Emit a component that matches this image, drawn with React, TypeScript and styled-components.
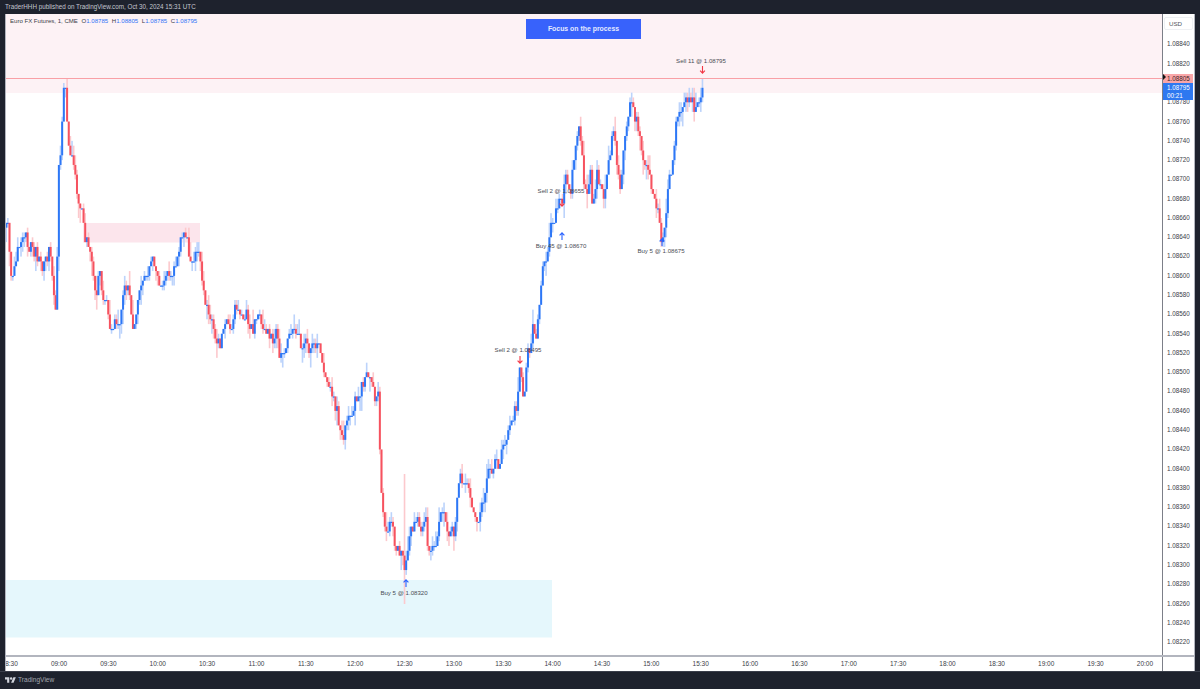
import React from "react";
import styled, { createGlobalStyle } from "styled-components";

const Global = createGlobalStyle`
  html, body { margin: 0; padding: 0; background: #1e222d; }
  #root { width: 1200px; height: 689px; }
`;

const FONT = `"Liberation Sans", Arial, sans-serif`;

const Page = styled.div`
  width: 1200px; height: 689px; display: flex; flex-direction: column;
  background: #1e222d; font-family: ${FONT}; overflow: hidden;
`;
const TopBar = styled.div`
  height: 14px; padding-left: 5px; font-size: 6.3px; line-height: 14px; color: #c3c6cf; white-space: nowrap;
`;
const Frame = styled.div`
  margin: 0 5px; height: 657px; display: flex; flex-direction: column; background: #fff; box-sizing: border-box;
  border-right: 1px solid #b2b5be; border-left: 1px solid #b2b5be;
`;
const ChartRow = styled.div`
  height: 641px; display: flex; border-bottom: 2px solid #b2b5be; box-sizing: content-box;
`;
const Pane = styled.div`
  position: relative; width: 1156px; overflow: hidden;
`;
const ChartSvg = styled.svg`
  position: absolute; inset: 0; display: block;
`;
const Legend = styled.div`
  position: absolute; left: 4px; top: 3px; font-size: 6.05px; line-height: 8px; color: #3b3e47; white-space: nowrap;
  display: flex; gap: 3.6px;
`;
const LegendItem = styled.span``;
const Val = styled.span`color: #2e72f5; font-size: 6.1px;`;
const Banner = styled.div`
  position: absolute; left: 520px; top: 5px; width: 115px; height: 20px; background: #3862fb;
  color: #e4eaff; font-size: 6.9px; font-weight: 700; line-height: 20px; text-align: center;
`;
const PriceAxis = styled.div`
  position: relative; width: 32px; border-left: 1px solid #7c7f88; background: #fff; overflow: hidden;
  padding-top: 20.4px; box-sizing: border-box;
`;
const UsdBox = styled.div`
  position: absolute; left: 1px; top: 3px; width: 29px; height: 13px; border: 1px solid #eef0f3; border-radius: 2px;
  box-sizing: border-box; font-size: 6.2px; line-height: 11px; color: #50535e; padding-left: 4px;
`;
const PriceLabel = styled.div<{ $covered?: boolean }>`
  height: 19.29px; line-height: 19.29px; font-size: 6.3px; color: #3b3e47; padding-left: 4px;
  visibility: ${(p) => (p.$covered ? "hidden" : "visible")};
`;
const LastHigh = styled.div`
  position: absolute; left: 0; top: 60px; width: 30px; height: 9px; background: #f9a6a8; color: #3b2527;
  font-size: 6.3px; line-height: 9px; padding-left: 4px; box-sizing: border-box;
`;
const LastPrice = styled.div`
  position: absolute; left: 0; top: 69px; width: 30px; height: 17px; background: #2e78f0; color: #fff;
  font-size: 6.3px; line-height: 8px; padding: 1px 0 0 4px; box-sizing: border-box;
`;
const Pointer = styled.div`
  position: absolute; left: 0; top: 60px; width: 0; height: 0;
  border-left: 3.5px solid #111; border-top: 3px solid transparent; border-bottom: 3px solid transparent;
`;
const TimeRow = styled.div`
  height: 14px; display: flex;
`;
const TimeAxis = styled.div`
  width: 1156px; overflow: hidden; display: flex;
`;
const TimeLabel = styled.div`
  flex: 0 0 49.36px; font-size: 6.5px; line-height: 13px; text-align: center; color: #3b3e47;
  &:first-child { margin-left: -21px; }
`;
const AxisCorner = styled.div`
  flex: 1; border-left: 1px solid #7c7f88;
`;
const Footer = styled.div`
  flex: 1; display: flex; align-items: center; gap: 2px; padding: 0 0 2px 5px;
  color: #a3a6af; font-size: 6.6px; border-top: 1px solid #3a3e4a;
`;
const Logo = styled.svg`display: block; width: 11px; height: 7px;`;
const TradeText = styled.text`
  font-family: ${FONT}; font-size: 6.1px; fill: #4a4c54; text-anchor: middle;
`;

const BLUE = "#2d77f6";
const RED = "#f6525f";
const BLUE_W = "#bcd3fb";
const RED_W = "#fcc9cd";

type P = [number, number];
const way: P[] = [
[5,228],[7,218],[9,245],[11,268],[12.5,276],[15,262],[17,256],[20,244],[23,238],[26,237],[29,246],[33,248],[36,252],[40,262],[44,266],[47,258],[50,250],[52,278],[54,300],[56.5,318],
[58.2,176],[60,160],[62,128],[64,90],[66,88],[67.6,128],[69,152],[71,155],[73,160],[75,172],[77,195],[80,212],[83,212],[85,238],[88,240],[90,250],[92,262],[95,288],[97,298],[99,268],[101,280],[103,298],[106,295],[108,312],[110,325],[113,328],[116,318],[120,322],[123,292],[127,284],[130,300],[133,325],[136,316],[139,296],[143,282],[147,276],[150,264],[153,262],[156,270],[159,280],[161,290],[164,280],[168,272],[172,274],[175,270],[178,260],[180,240],[183,234],[185,230],[187,240],[190,255],[193,262],[196,252],[199,255],[201,272],[203,288],[206,300],[208,312],[212,322],[214,336],[218,344],[220,346],[223,332],[228,322],[231,325],[234,312],[237,306],[240,316],[243,318],[246,314],[249,322],[252,334],[255,318],[258,316],[261,325],[264,338],[267,328],[270,335],[273,340],[276,332],[279,352],[282,356],[285,352],[288,338],[291,330],[294,326],[297,332],[300,342],[303,350],[306,344],[309,350],[313,345],[316,350],[318,342],[321,354],[323,368],[326,376],[328,388],[331,392],[334,398],[337,414],[340,432],[343,442],[346,428],[349,416],[352,412],[355,404],[358,396],[361,388],[364,380],[367,376],[370,378],[372,386],[375,398],[377,400],[379,384],
[380.5,490],[382,505],[384,520],[386,532],[388,528],[391,514],[393,530],[396,552],[399,548],[402,546],[405,574],[407,560],[409,540],[412,532],[415,520],[418,510],[420,525],[423,530],[426,522],[428,545],[431,552],[434,548],[437,540],[440,516],[443,510],[446,526],[449,534],[452,534],[455,530],[457,498],[459,480],[462,478],[465,480],[467,486],[470,492],[473,505],[476,520],[479,522],[482,508],[485,490],[488,472],[491,472],[494,466],[497,458],[499,470],[502,446],[505,450],[508,434],[511,430],[514,408],[516,408],[518,392],[520,366],[522,376],[524,408],[526,370],[528,350],[531,352],[533,318],[536,340],[538,316],[540,300],[542,270],[544,272],[546,258],[549,244],[551,228],[553,230],[556,212],[558,200],[561,196],[563,212],[565,170],[567,182],[570,200],[572,175],[575,152],[577,142],[579,130],[581,145],[583,170],[586,195],[588,190],[590,165],[592,200],[595,198],[597,176],[600,178],[603,198],[605,190],[608,165],[611,150],[613,120],[615,138],[618,172],[621,190],[623,150],[626,125],[629,108],[632,98],[634,110],[636,118],[639,132],[641,152],[644,168],[646,172],[649,160],[651,190],[654,202],[656,205],[658,200],[660,225],[662,242],[664,236],[666,215],[668,190],[671,170],[673,158],[675,132],[678,108],[680,116],[683,112],[686,98],[689,102],[692,98],[695,108],[697,100],[700,102],[703,90]
];

function priceAt(x: number) {
  for (let i = 0; i < way.length - 1; i++) {
    if (x >= way[i][0] && x <= way[i + 1][0]) {
      const t = (x - way[i][0]) / (way[i + 1][0] - way[i][0]);
      return way[i][1] + (way[i + 1][1] - way[i][1]) * t;
    }
  }
  return way[way.length - 1][1];
}

function rng(seed: number) {
  let s = seed;
  return () => { s = (s * 16807) % 2147483647; return s / 2147483647; };
}

const TICK = 4.8225;
const ORIGIN = 44.4;
const quant = (y: number) => ORIGIN + Math.round((y - ORIGIN) / TICK) * TICK;

const candles = (() => {
  const r = rng(20241030);
  const out: { x: number; o: number; c: number; h: number; l: number }[] = [];
  let prev = quant(priceAt(5));
  const ext = () => {
    const v = r();
    return v < 0.35 ? 0 : v < 0.7 ? TICK : v < 0.92 ? TICK * 2 : TICK * 3;
  };
  for (let x = 6.2; x <= 703.4; x += 1.646) {
    const base = priceAt(x);
    const c = x > 702 ? quant(88) : quant(base + (r() - 0.5) * 12);
    const o = prev;
    const top = Math.max(Math.min(o, c) - ext(), 78.2);
    const bot = Math.max(o, c) + ext();
    out.push({ x, o, c, h: top, l: bot });
    prev = c;
  }
  return out;
})();

const wickSpikes: Record<number, [number, number]> = {};
candles.forEach((k, i) => {
  if (Math.abs(k.x - 404) < 0.9) wickSpikes[i] = [474, 604];
  if (Math.abs(k.x - 66.6) < 0.9) wickSpikes[i] = [78, k.l];
  if (Math.abs(k.x - 703) < 0.9) wickSpikes[i] = [78, k.l];
});

const prices = Array.from({ length: 32 }, (_, i) => (1.0884 - i * 0.0002).toFixed(5));
const times = ["08:30","09:00","09:30","10:00","10:30","11:00","11:30","12:00","12:30","13:00","13:30","14:00","14:30","15:00","15:30","16:00","16:30","17:00","17:30","18:00","18:30","19:00","19:30","20:00"];

const trades = [
  { t: "Sell 11 @ 1.08795", x: 701, y: 63 },
  { t: "Sell 2 @ 1.08655", x: 561, y: 193 },
  { t: "Buy 45 @ 1.08670", x: 561, y: 248 },
  { t: "Sell 2 @ 1.08495", x: 518, y: 352 },
  { t: "Buy 5 @ 1.08675", x: 661, y: 253 },
  { t: "Buy 5 @ 1.08320", x: 404, y: 595 },
];
const downs: P[] = [[702.5, 66], [562, 199], [520, 356]];
const ups: P[] = [[562, 240], [662, 246], [406, 587]];

const Arrow = ({ x, y, up }: { x: number; y: number; up?: boolean }) => {
  const d = up
    ? `M${x} ${y}V${y - 7}M${x - 2.4} ${y - 4.6}L${x} ${y - 7.2}L${x + 2.4} ${y - 4.6}`
    : `M${x} ${y}V${y + 7}M${x - 2.4} ${y + 4.6}L${x} ${y + 7.2}L${x + 2.4} ${y + 4.6}`;
  return <path d={d} stroke={up ? "#2962ff" : "#f23645"} strokeWidth={1.1} fill="none" />;
};

export default function App() {
  return (
    <Page>
      <Global />
      <TopBar>TraderHHH published on TradingView.com, Oct 30, 2024 15:31 UTC</TopBar>
      <Frame>
        <ChartRow>
          <Pane>
            <ChartSvg width={1156} height={641} viewBox="6 14 1156 641">
              <rect x={6} y={14} width={1156} height={79} fill="#fdf2f5" />
              <rect x={83} y={223} width={117} height={19.5} fill="#fce5ec" />
              <rect x={6} y={580} width={546} height={57.5} fill="#e5f7fc" />
              {candles.map((k, i) => {
                const up = k.c <= k.o;
                const w = wickSpikes[i];
                const top = w ? w[0] : k.h;
                const bot = w ? w[1] : k.l;
                return <rect key={i} x={k.x - 0.8} y={top} width={1.6} height={bot - top} fill={up ? BLUE_W : RED_W} />;
              })}
              {candles.map((k, i) => (
                <rect
                  key={i}
                  x={k.x - 1}
                  y={Math.min(k.o, k.c)}
                  width={2}
                  height={Math.max(Math.abs(k.c - k.o), 1.2)}
                  fill={k.c <= k.o ? BLUE : RED}
                />
              ))}
              <rect x={6} y={78} width={1156} height={1} fill="#f9a0a6" />
              {trades.map((t) => (
                <TradeText key={t.t} x={t.x} y={t.y}>{t.t}</TradeText>
              ))}
              {downs.map(([x, y]) => <Arrow key={`${x}`} x={x} y={y} />)}
              {ups.map(([x, y]) => <Arrow key={`${x}`} x={x} y={y} up />)}
            </ChartSvg>
            <Legend>
              <LegendItem>Euro FX Futures, 1, CME</LegendItem>
              <LegendItem>O<Val>1.08785</Val></LegendItem>
              <LegendItem>H<Val>1.08805</Val></LegendItem>
              <LegendItem>L<Val>1.08785</Val></LegendItem>
              <LegendItem>C<Val>1.08795</Val></LegendItem>
            </Legend>
            <Banner>Focus on the process</Banner>
          </Pane>
          <PriceAxis>
            <UsdBox>USD</UsdBox>
            {prices.map((p) => <PriceLabel key={p} $covered={p === "1.08800"}>{p}</PriceLabel>)}
            <LastHigh>1.08805</LastHigh>
            <LastPrice>1.08795<br />00:21</LastPrice>
            <Pointer />
          </PriceAxis>
        </ChartRow>
        <TimeRow>
          <TimeAxis>{times.map((t) => <TimeLabel key={t}>{t}</TimeLabel>)}</TimeAxis>
          <AxisCorner />
        </TimeRow>
      </Frame>
      <Footer>
        <Logo viewBox="0 0 36 22">
          <path fill="#d1d4dc" d="M14 22H7V11H0V4h14v18zM28 22h-8l7.5-18h8L28 22z" />
          <circle fill="#d1d4dc" cx="20" cy="8" r="4" />
        </Logo>
        TradingView
      </Footer>
    </Page>
  );
}
